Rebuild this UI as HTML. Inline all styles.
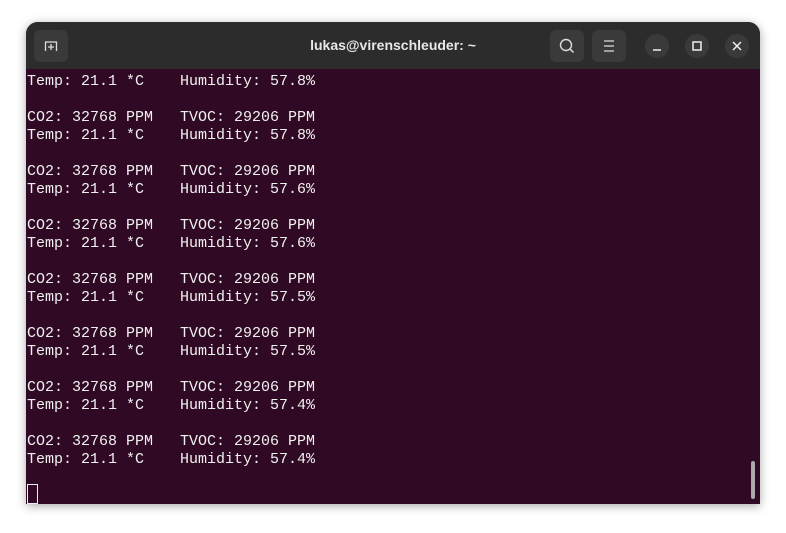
<!DOCTYPE html>
<html><head><meta charset="utf-8"><style>
html,body{margin:0;padding:0;width:786px;height:533px;background:#fff;overflow:hidden;}
.win{position:absolute;left:26px;top:22px;width:734px;height:482px;border-radius:12px 12px 0 0;overflow:hidden;box-shadow:0 2px 10px rgba(0,0,0,0.35);background:#300a24;}
.hdr{position:absolute;left:0;top:0;width:734px;height:47px;background:#2c2c2c;}
.title{position:absolute;left:0;right:0;top:15px;text-align:center;color:#e8e8e8;font:bold 14px "Liberation Sans",sans-serif;}
.btn{position:absolute;top:8px;width:34px;height:32px;background:#3a3a3a;border-radius:6px;}
.circ{position:absolute;top:12px;width:24px;height:24px;border-radius:50%;background:#3a3a3a;}
.term{position:absolute;left:1px;top:51px;color:#f0f0f0;font:15px/18px "Liberation Mono",monospace;white-space:pre;}
.cursor{position:absolute;left:1px;top:462px;width:9px;height:18px;border:1px solid #eee;}
.sb{position:absolute;left:725px;top:439px;width:4px;height:38px;border-radius:2px;background:#aaa;}
</style></head><body>
<div class="win">
<div class="hdr">
<div class="btn" style="left:8px"><svg width="34" height="32"><path d="M11.5 21V12h11v9M17 14v6M14 17h6" stroke="#ddd" stroke-width="1.3" fill="none"/></svg></div>
<div class="title">lukas@virenschleuder: ~</div>
<div class="btn" style="left:524px"><svg width="34" height="32"><circle cx="16" cy="15" r="5.5" stroke="#ddd" stroke-width="1.4" fill="none"/><path d="M20 19l3.5 3.5" stroke="#ddd" stroke-width="1.5"/></svg></div>
<div class="btn" style="left:566px"><svg width="34" height="32"><path d="M12 11h10M12 16h10M12 21h10" stroke="#ddd" stroke-width="1.2"/></svg></div>
<div class="circ" style="left:619px"><svg width="24" height="24"><path d="M8 16h8" stroke="#eee" stroke-width="1.5"/></svg></div>
<div class="circ" style="left:659px"><svg width="24" height="24"><rect x="8" y="8" width="8" height="8" stroke="#eee" stroke-width="1.5" fill="none"/></svg></div>
<div class="circ" style="left:699px"><svg width="24" height="24"><path d="M8 8l8 8M16 8l-8 8" stroke="#eee" stroke-width="1.5"/></svg></div>
</div>
<div class="term">Temp: 21.1 *C    Humidity: 57.8%

CO2: 32768 PPM   TVOC: 29206 PPM
Temp: 21.1 *C    Humidity: 57.8%

CO2: 32768 PPM   TVOC: 29206 PPM
Temp: 21.1 *C    Humidity: 57.6%

CO2: 32768 PPM   TVOC: 29206 PPM
Temp: 21.1 *C    Humidity: 57.6%

CO2: 32768 PPM   TVOC: 29206 PPM
Temp: 21.1 *C    Humidity: 57.5%

CO2: 32768 PPM   TVOC: 29206 PPM
Temp: 21.1 *C    Humidity: 57.5%

CO2: 32768 PPM   TVOC: 29206 PPM
Temp: 21.1 *C    Humidity: 57.4%

CO2: 32768 PPM   TVOC: 29206 PPM
Temp: 21.1 *C    Humidity: 57.4%</div>
<div class="cursor"></div>
<div class="sb"></div>
</div>
</body></html>
